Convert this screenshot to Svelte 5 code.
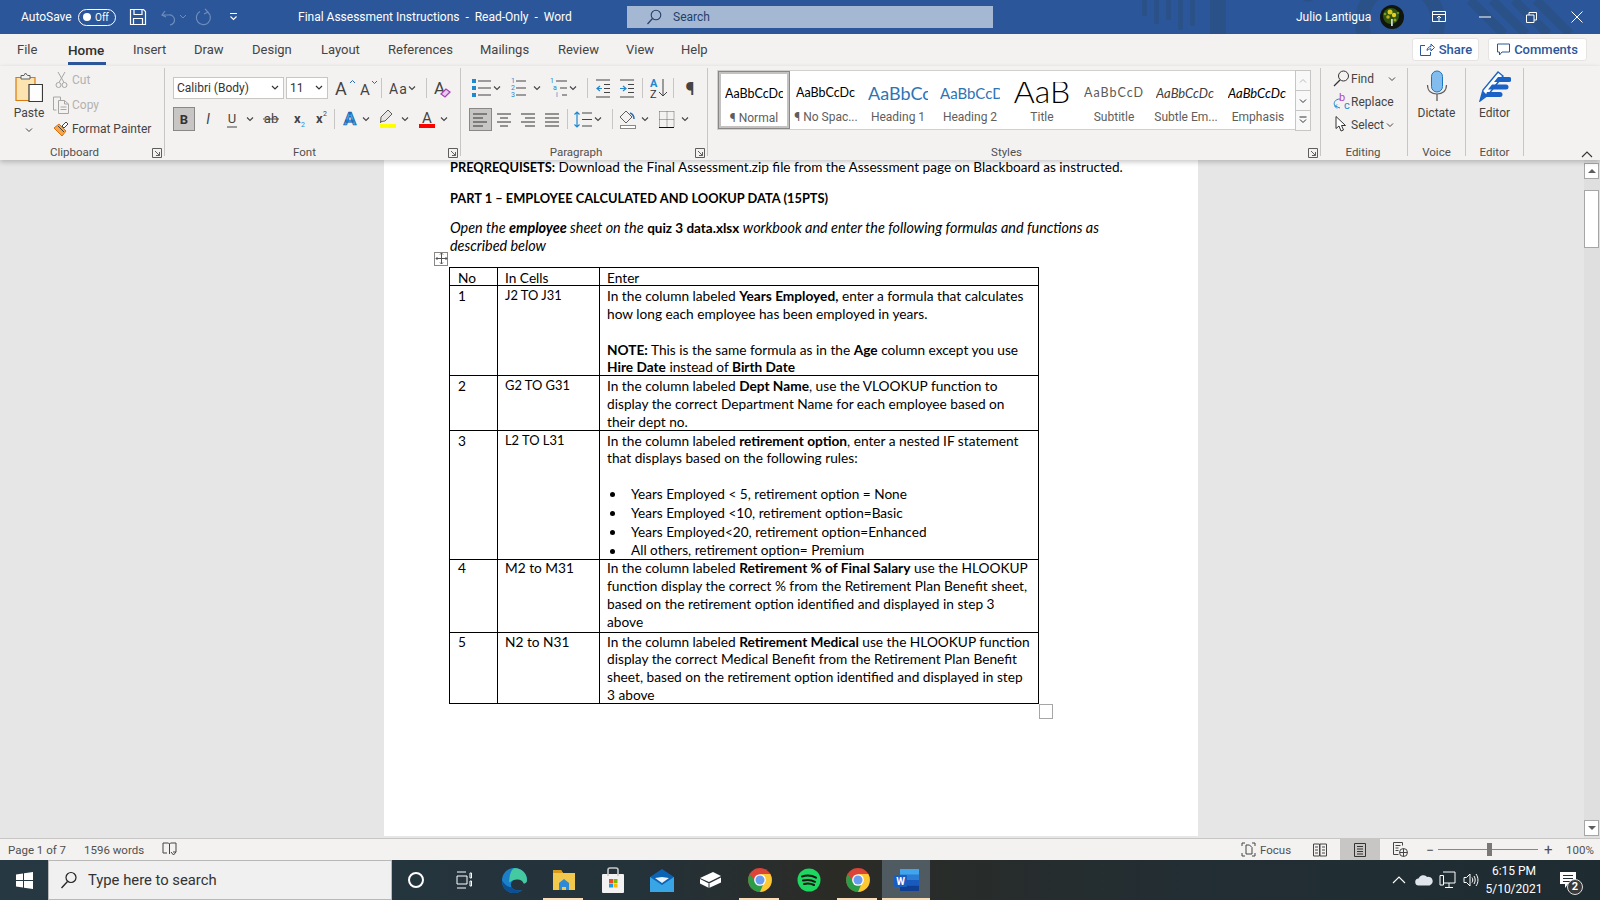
<script>
  const tabs = [
    ['File', 51], ['Home', 65], ['Insert', 61], ['Draw', 58], ['Design', 69], ['Layout', 67],
    ['References', 92], ['Mailings', 78], ['Review', 68], ['View', 55], ['Help', 40]
  ];
  const styles = [
    { s: 'AaBbCcDc', l: '¶ Normal', c: 'normal sel' },
    { s: 'AaBbCcDc', l: '¶ No Spac...', c: 'normal' },
    { s: 'AaBbCc', l: 'Heading 1', c: 'h1' },
    { s: 'AaBbCcD', l: 'Heading 2', c: 'h2' },
    { s: 'AaB', l: 'Title', c: 'title' },
    { s: 'AaBbCcD', l: 'Subtitle', c: 'sub' },
    { s: 'AaBbCcDc', l: 'Subtle Em...', c: 'sem' },
    { s: 'AaBbCcDc', l: 'Emphasis', c: 'emp' }
  ];
</script>

{#snippet chev(x, y)}
  <path d="M{x - 3} {y - 1.5}l3 3 3-3" fill="none" stroke="#444" stroke-width="1.1" />
{/snippet}

{#snippet launcher()}
  <svg class="launch" width="10" height="10" viewBox="0 0 10 10">
    <path d="M.5 9.500V.5h9v9zM3 3l4.500 4.500M7.500 4v3.500H4" fill="none" stroke="#605e5c" />
  </svg>
{/snippet}

{#snippet chrome(id)}
  <svg width="26" height="26" viewBox="0 0 24 24" data-k={id}>
    <circle cx="12" cy="12" r="11" fill="#db4437" />
    <path d="M2.500 6.500A11 11 0 0 0 12 23l5-9H8z" fill="#2b9c47" />
    <path d="M12 23A11 11 0 0 0 21.500 6.500H12l4 7z" fill="#fcc934" />
    <circle cx="12" cy="12" r="5.400" fill="#fff" />
    <circle cx="12" cy="12" r="4.200" fill="#6a9cf0" />
  </svg>
{/snippet}

<div class="app">
  <header class="titlebar">
    <svg class="pattern" width="480" height="34" viewBox="0 0 480 34" aria-hidden="true">
      <g fill="#2a5288">
        <rect x="22" y="0" width="5" height="16" /><rect x="34" y="0" width="5" height="24" />
        <rect x="46" y="0" width="5" height="20" /><rect x="58" y="0" width="5" height="30" />
        <rect x="70" y="0" width="5" height="26" /><rect x="90" y="0" width="16" height="34" />
      </g>
      <circle cx="188" cy="-6" r="8" fill="#2a5288" />
      <circle cx="280" cy="22" r="38" fill="none" stroke="#2a5288" stroke-width="14" />
      <path d="M350 0l34 34M372 0l34 34M394 0l34 34M416 0l34 34" stroke="#2a5288" stroke-width="9" />
    </svg>
    <div class="tb-left">
      <span class="autosave">AutoSave</span>
      <span class="toggle"><i></i><b>Off</b></span>
      <svg width="18" height="18" viewBox="0 0 18 18"><path d="M1.500 1.500h13l2 2v13h-15zM5 1.500v5h8v-5M4.500 16.500v-6h9v6" fill="none" stroke="#fff" stroke-width="1.200" /></svg>
      <svg class="dim" width="26" height="18" viewBox="0 0 26 18"><path d="M5 3L2 7l4 2M2.500 7H9a5 5 0 0 1 1 10" fill="none" stroke="#6f8dba" stroke-width="1.200" /><path d="M20 7l3 3 3-3" fill="none" stroke="#6f8dba" /></svg>
      <svg class="dim2" width="18" height="18" viewBox="0 0 18 18"><path d="M11 1l3 3-4 2M13.500 4A7 7 0 1 1 6 3.500" fill="none" stroke="#6f8dba" stroke-width="1.200" /></svg>
      <svg class="qat" width="10" height="10" viewBox="0 0 10 10"><path d="M1 1.500h7M1.500 4.500l3 3 3-3" fill="none" stroke="#fff" stroke-width="1.100" /></svg>
    </div>
    <div class="doc-title">Final Assessment Instructions &nbsp;-&nbsp; Read-Only &nbsp;-&nbsp; Word</div>
    <div class="search">
      <svg width="16" height="16" viewBox="0 0 16 16"><circle cx="10" cy="6" r="4.800" fill="none" stroke="#243f6b" stroke-width="1.100" /><path d="M6.500 9.500L1.500 15" stroke="#243f6b" stroke-width="1.200" /></svg>
      <span>Search</span>
    </div>
    <div class="user">Julio Lantigua</div>
    <svg class="avatar" width="24" height="24" viewBox="0 0 24 24">
      <circle cx="12" cy="12" r="12" fill="#10160d" />
      <circle cx="11" cy="11" r="8" fill="#2f5213" />
      <circle cx="10" cy="7" r="2.500" fill="#d8c820" /><circle cx="14" cy="10" r="2.200" fill="#e3d321" />
      <circle cx="8" cy="12" r="1.800" fill="#b9ae1e" /><circle cx="15" cy="15" r="1.500" fill="#8fa51c" />
      <circle cx="5" cy="9" r="1.300" fill="#7e9c1e" /><circle cx="18" cy="8" r="1.300" fill="#5f8a1e" />
      <rect x="11" y="14" width="1.800" height="7" fill="#c9d8d0" />
    </svg>
    <div class="winbtns">
      <svg width="15" height="12" viewBox="0 0 15 12"><path d="M.5.500h13v10H.5zM.5 3.500h13M7 10V5M5 7l2-2 2 2" fill="none" stroke="#fff" /></svg>
      <svg class="w-min" width="13" height="12" viewBox="0 0 13 12"><path d="M0 6h12" stroke="#fff" /></svg>
      <svg width="11" height="11" viewBox="0 0 11 11"><path d="M.5 3h7.500v7.500H.5zM3 3V.5h7.500V8H8" fill="none" stroke="#fff" /></svg>
      <svg width="12" height="12" viewBox="0 0 12 12"><path d="M.5.500l11 11M11.500.500l-11 11" stroke="#fff" /></svg>
    </div>
  </header>

  <nav class="tabrow">
    {#each tabs as [t, w]}
      <div class="tab" style="width:{w}px"><span class:active={t === 'Home'}>{t}</span></div>
    {/each}
    <div class="actions">
      <button class="act share">
        <svg width="16" height="15" viewBox="0 0 16 15"><path d="M6 3.500H1.500v10h10V10M8 8.500C8 6 10 4.500 12 4.500V2l3.500 3.500L12 9V6.800c-2 0-3 .7-4 1.700z" fill="none" stroke="#2b579a" /></svg>
        Share
      </button>
      <button class="act comments">
        <svg width="13" height="13" viewBox="0 0 13 13"><path d="M.5 1h12v8H5l-2.500 3V9h-2z" fill="none" stroke="#2b579a" /></svg>
        Comments
      </button>
    </div>
  </nav>

  <section class="ribbon">
    <div class="group clip">
      <div class="body clip-body">
        <div class="paste">
          <svg width="28" height="32" viewBox="0 0 28 32">
            <path d="M1 5.500h19v23H1z" fill="#fde3b0" stroke="#d97a10" stroke-width="1.200" />
            <path d="M6 7V3.500h3L10.500 1l2 2.500H15V7z" fill="#f3f2f1" stroke="#605e5c" />
            <path d="M14 12.500h13.500v17H14z" fill="#fdfdfd" stroke="#3b3a39" stroke-width="1.200" />
          </svg>
          <span>Paste</span>
          <svg width="10" height="6" viewBox="0 0 10 6"><path d="M2 1.500l3 3 3-3" fill="none" stroke="#444" /></svg>
        </div>
        <div class="clip-side">
          <div class="row disabled">
            <svg width="19" height="18" viewBox="0 0 19 18"><path d="M5 1l6 10.500M12 1L6 11.500" fill="none" stroke="#a8a6a4" /><circle cx="5.500" cy="14" r="2.500" fill="none" stroke="#a8a6a4" /><circle cx="11.500" cy="14" r="2.500" fill="none" stroke="#a8a6a4" /></svg>
            <span>Cut</span>
          </div>
          <div class="row disabled">
            <svg width="19" height="18" viewBox="0 0 19 18"><path d="M.5 1h7v3M3.500 14H.5V1M5.500 4.500h6l4 3.500v9.500h-10zM11.500 4.500V8h4M7.500 11h6M7.500 13.500h6" fill="none" stroke="#a8a6a4" /></svg>
            <span>Copy</span>
          </div>
          <div class="row">
            <svg width="19" height="18" viewBox="0 0 19 18"><path d="M9 6l4-4 2 2-4 4z" fill="#fff" stroke="#444" /><path d="M6 4l7 7-4 5-8-8z" fill="#f6a74b" stroke="#d9700e" /><path d="M5 6l6 6" stroke="#444" /></svg>
            <span>Format Painter</span>
          </div>
        </div>
      </div>
      <div class="glabel">Clipboard{@render launcher()}</div>
    </div>

    <div class="group font">
      <div class="body rows">
        <div class="tline">
          <div class="sel-box fname">Calibri (Body)<svg width="10" height="6" viewBox="0 0 10 6"><path d="M2 1l3 3 3-3" fill="none" stroke="#333" stroke-width="1.200" /></svg></div>
          <div class="sel-box fsize">11<svg width="10" height="6" viewBox="0 0 10 6"><path d="M2 1l3 3 3-3" fill="none" stroke="#333" stroke-width="1.200" /></svg></div>
          <svg width="132" height="24">
            <text x="7" y="19" class="ua" font-size="18">A</text>
            <path d="M22 7l2.500-2.500L27 7" fill="none" stroke="#2b6cb0" />
            <text x="32" y="19" class="ua" font-size="15">A</text>
            <path d="M44 5l2.500 2.500L49 5" fill="none" stroke="#2b6cb0" />
            <path d="M53.500 2v20" stroke="#c8c6c4" />
            <text x="61" y="18" class="ua" font-size="14" letter-spacing="1">Aa</text>
            {@render chev(84, 12)}
            <path d="M98.500 2v20" stroke="#c8c6c4" />
            <text x="106" y="18" class="ua" font-size="17">A</text>
            <path d="M113 18l5-5 4 3-5 5z" fill="#e8cdee" stroke="#a742b8" stroke-width="1.300" />
          </svg>
        </div>
        <div class="tline">
          <button class="bold-btn">B</button>
          <svg width="265" height="24">
            <text x="13" y="17" class="ua" text-anchor="middle" font-size="14" font-style="italic">I</text>
            <text x="37" y="16" class="ua" text-anchor="middle" font-size="13">U</text>
            <path d="M32 20h10" stroke="#444" />
            {@render chev(55, 12)}
            <text x="76" y="16" class="ua" text-anchor="middle" font-size="13">ab</text>
            <path d="M68 12h16" stroke="#444" />
            <text x="99" y="16" class="ua" font-size="13" font-weight="700">x</text>
            <text x="106" y="20" font-size="7" fill="#2b88d8" class="ub">2</text>
            <text x="121" y="16" class="ua" font-size="13" font-weight="700">x</text>
            <text x="128" y="9" font-size="7" fill="#444" class="ub">2</text>
            <path d="M139.500 2v20" stroke="#c8c6c4" />
            <text x="155" y="18" class="ub" text-anchor="middle" font-size="19" font-weight="700" fill="#4aa3e8" stroke="#0f5da8" stroke-width=".7">A</text>
            {@render chev(171, 12)}
            <path d="M193 3l4 4-7 7-4 .5-.5 1.500 .5-6z" fill="#e8e6e4" stroke="#605e5c" />
            <rect x="185" y="17" width="16" height="4" fill="#ffff00" />
            {@render chev(210, 12)}
            <text x="232" y="16" class="ua" text-anchor="middle" font-size="15">A</text>
            <rect x="224" y="17" width="16" height="4" fill="#ff0000" />
            {@render chev(249, 12)}
          </svg>
        </div>
      </div>
      <div class="glabel">Font{@render launcher()}</div>
    </div>

    <div class="group para">
      <div class="body rows">
        <svg width="242" height="24">
          <g fill="#1e88d0"><rect x="7" y="3" width="4" height="4" /><rect x="7" y="10" width="4" height="4" /><rect x="7" y="17" width="4" height="4" /></g>
          <path d="M13 5h13M13 12h13M13 19h13" stroke="#444" />
          {@render chev(32, 12)}
          <g fill="#1e88d0" font-size="7" class="ub"><text x="46" y="7">1</text><text x="46" y="14">2</text><text x="46" y="21">3</text></g>
          <path d="M51 5h10M51 12h10M51 19h10" stroke="#444" />
          {@render chev(72, 12)}
          <g fill="#1e88d0" font-size="7" class="ub"><text x="85" y="7">1</text><text x="88" y="14">a</text><text x="91" y="21">i</text></g>
          <path d="M91 5h11M95 12h7M97 19h5" stroke="#444" />
          {@render chev(108, 12)}
          <path d="M122.500 2v20" stroke="#c8c6c4" />
          <path d="M131 4h14M139 8.500h6M139 12.500h6M139 16.500h6M131 21h14" stroke="#444" />
          <path d="M137 12.500h-5M135 10l-3 2.500 3 2.500" fill="none" stroke="#1e88d0" stroke-width="1.200" />
          <path d="M155 4h14M163 8.500h6M163 12.500h6M163 16.500h6M155 21h14" stroke="#444" />
          <path d="M155 12.500h6M158 10l3 2.500-3 2.500" fill="none" stroke="#1e88d0" stroke-width="1.200" />
          <path d="M177.500 2v20" stroke="#c8c6c4" />
          <text x="185" y="11" font-size="11" font-weight="700" fill="#1e88d0" class="ub">A</text>
          <text x="185" y="22" font-size="11" fill="#333" class="ub">Z</text>
          <path d="M198 3v17M194 16l4 4 4-4" fill="none" stroke="#444" />
          <path d="M208.500 2v20" stroke="#c8c6c4" />
          <text x="225" y="19" text-anchor="middle" font-size="18" font-weight="700" fill="#444" class="ub">¶</text>
        </svg>
        <svg width="242" height="24">
          <rect x="4.500" y="1.500" width="22" height="22" fill="#c8c6c4" stroke="#8a8886" />
          <path d="M8 7h14M8 11h10M8 15h14M8 19h10" stroke="#333" />
          <path d="M32 7h14M35 11h8M32 15h14M35 19h8" stroke="#333" />
          <path d="M56 7h14M60 11h10M56 15h14M60 19h10" stroke="#333" />
          <path d="M80 7h14M80 11h14M80 15h14M80 19h14" stroke="#333" />
          <path d="M102.500 2v20" stroke="#c8c6c4" />
          <path d="M112 5v15M109.500 7.500L112 5l2.500 2.500M109.500 17.500L112 20l2.500-2.500" fill="none" stroke="#1e88d0" stroke-width="1.200" />
          <path d="M117 6h10M117 12.500h10M117 19h10" stroke="#444" />
          {@render chev(133, 12)}
          <path d="M147.500 2v20" stroke="#c8c6c4" />
          <path d="M161 4l6 6-6 6-6-6z" fill="#f3f2f1" stroke="#605e5c" />
          <path d="M165 6c3 1 4 3 4 6" fill="none" stroke="#2b6cb0" stroke-width="1.500" />
          <rect x="155.500" y="18.500" width="15" height="3" fill="#fff" stroke="#8a8886" />
          {@render chev(180, 12)}
          <path d="M194.500 4.500h14.500M194.500 4.500v16M209 4.500v16M202 4.500v16M194.500 12.500h14.500" fill="none" stroke="#666" stroke-dasharray="1 1" />
          <path d="M194 20.500h15" stroke="#111" />
          {@render chev(220, 12)}
        </svg>
      </div>
      <div class="glabel">Paragraph{@render launcher()}</div>
    </div>

    <div class="group stylesg">
      <div class="body">
        <div class="gallery">
          {#each styles as st}
            <div class="style {st.c}">
              <div class="sample"><span>{st.s}</span></div>
              <div class="slabel">{st.l}</div>
            </div>
          {/each}
          <div class="gscroll">
            <div><svg width="10" height="6" viewBox="0 0 10 6"><path d="M2 4.500l3-3 3 3" fill="none" stroke="#bdbbb9" /></svg></div>
            <div><svg width="10" height="6" viewBox="0 0 10 6"><path d="M2 1.500l3 3 3-3" fill="none" stroke="#333" /></svg></div>
            <div><svg width="10" height="9" viewBox="0 0 10 9"><path d="M1.500 1h7M2 3.500l3 3 3-3" fill="none" stroke="#333" /></svg></div>
          </div>
        </div>
      </div>
      <div class="glabel">Styles{@render launcher()}</div>
    </div>

    <div class="group editing">
      <div class="body edit-list">
        <div class="row">
          <svg width="17" height="17" viewBox="0 0 17 17"><circle cx="10.500" cy="6" r="5" fill="none" stroke="#333" /><path d="M7 10l-6 6" stroke="#333" stroke-width="1.300" /></svg>
          <span>Find</span>
          <svg class="rchev" width="10" height="6" viewBox="0 0 10 6"><path d="M2 1.500l3 3 3-3" fill="none" stroke="#444" /></svg>
        </div>
        <div class="row">
          <svg width="17" height="17" viewBox="0 0 17 17">
            <text x="6" y="8" font-size="11" fill="#b146c2" class="ub">b</text>
            <text x="11" y="16" font-size="11" fill="#1e88d0" class="ub">c</text>
            <path d="M7 6C2 6 0 10 2 13l5 2M4 11.500L2 13.500l2 2" fill="none" stroke="#1e88d0" />
          </svg>
          <span>Replace</span>
        </div>
        <div class="row">
          <svg width="17" height="17" viewBox="0 0 17 17"><path d="M3 .5v12l3-2.500 2 5 2.500-1-2-4.500h4z" fill="#fff" stroke="#333" /></svg>
          <span>Select</span>
          <svg class="schev" width="10" height="6" viewBox="0 0 10 6"><path d="M2 1.500l3 3 3-3" fill="none" stroke="#444" /></svg>
        </div>
      </div>
      <div class="glabel">Editing</div>
    </div>

    <div class="group voice">
      <div class="body big">
        <svg width="22" height="32" viewBox="0 0 22 32">
          <rect x="5.500" y="1" width="11" height="21" rx="5.500" fill="#83bdee" stroke="#1c74c4" />
          <path d="M1.500 15c0 6 4 9 9.500 9s9.500-3 9.500-9" fill="none" stroke="#605e5c" stroke-width="1.200" />
          <path d="M11 24v7" stroke="#605e5c" stroke-width="1.300" />
        </svg>
        <span>Dictate</span>
      </div>
      <div class="glabel">Voice</div>
    </div>

    <div class="group editor">
      <div class="body big">
        <svg width="32" height="32" viewBox="0 0 32 32">
          <path d="M1 31L4 20 19 2l5 4L9 25z" fill="#fff" stroke="#1a62c6" stroke-width="1.400" />
          <path d="M1 31l7-6-4-4z" fill="#1a62c6" />
          <path d="M19 7h11a2 2 0 0 1 0 5H15zM13 14.500h14a2 2 0 0 1 0 5H9zM8 22h13a2 2 0 0 1 0 5H6z" fill="#1a62c6" />
        </svg>
        <span>Editor</span>
      </div>
      <div class="glabel">Editor</div>
    </div>

    <svg class="collapse" width="14" height="8" viewBox="0 0 14 8"><path d="M2 7l5-5 5 5" fill="none" stroke="#333" stroke-width="1.100" /></svg>
  </section>

  <main class="docarea">
    <div class="canvas">
      <article class="page">
        <p class="first"><b>PREQREQUISETS:</b> Download the Final Assessment.zip file from the Assessment page on Blackboard as instructed.</p>
        <p class="part"><b>PART 1 – EMPLOYEE CALCULATED AND LOOKUP DATA (15PTS)</b></p>
        <p class="open"><em>Open the <b>employee</b> sheet on the</em> <b>quiz 3 data.xlsx</b> <em>workbook and enter the following formulas and functions as<br />described below</em></p>
        <div class="tablewrap">
          <span class="move"><svg width="13" height="13" viewBox="0 0 13 13"><path d="M6.500 1v11M1 6.500h11M5 2.500L6.500 1 8 2.500M5 10.500L6.500 12 8 10.500M2.500 5L1 6.500 2.500 8M10.500 5L12 6.500 10.500 8" fill="none" stroke="#555" /></svg></span>
          <table>
            <colgroup><col class="c1" /><col class="c2" /><col class="c3" /></colgroup>
            <tbody>
              <tr><td>No</td><td>In Cells</td><td>Enter</td></tr>
              <tr>
                <td>1</td><td class="caps">J2 TO J31</td>
                <td>In the column labeled <b>Years Employed,</b> enter a formula that calculates<br />how long each employee has been employed in years.<br /><br /><b>NOTE:</b> This is the same formula as in the <b>Age</b> column except you use<br /><b>Hire Date</b> instead of <b>Birth Date</b></td>
              </tr>
              <tr>
                <td>2</td><td class="caps">G2 TO G31</td>
                <td>In the column labeled <b>Dept Name</b>, use the VLOOKUP function to<br />display the correct Department Name for each employee based on<br />their dept no.</td>
              </tr>
              <tr>
                <td>3</td><td class="caps">L2 TO L31</td>
                <td>In the column labeled <b>retirement option</b>, enter a nested IF statement<br />that displays based on the following rules:<br /><br />
                  <ul>
                    <li>Years Employed &lt; 5, retirement option = None</li>
                    <li>Years Employed &lt;10, retirement option=Basic</li>
                    <li>Years Employed&lt;20, retirement option=Enhanced</li>
                    <li class="last">All others, retirement option= Premium</li>
                  </ul>
                </td>
              </tr>
              <tr class="row4">
                <td>4</td><td>M2 to M31</td>
                <td>In the column labeled <b>Retirement % of Final Salary</b> use the HLOOKUP<br />function display the correct % from the Retirement Plan Benefit sheet,<br />based on the retirement option identified and displayed in step 3<br />above</td>
              </tr>
              <tr class="lastrow">
                <td>5</td><td>N2 to N31</td>
                <td>In the column labeled <b>Retirement Medical</b> use the HLOOKUP function<br />display the correct Medical Benefit from the Retirement Plan Benefit<br />sheet, based on the retirement option identified and displayed in step<br />3 above</td>
              </tr>
            </tbody>
          </table>
          <span class="resize"></span>
        </div>
      </article>
    </div>
    <aside class="scrollbar">
      <div class="sbtn"><svg width="10" height="6" viewBox="0 0 10 6"><path d="M1 5l4-4 4 4z" fill="#605e5c" /></svg></div>
      <div class="thumb"></div>
      <div class="sbtn down"><svg width="10" height="6" viewBox="0 0 10 6"><path d="M1 1l4 4 4-4z" fill="#605e5c" /></svg></div>
    </aside>
  </main>

  <footer class="status">
    <span class="st-page">Page 1 of 7</span>
    <span class="st-words">1596 words</span>
    <svg width="15" height="15" viewBox="0 0 15 15"><path d="M1 1h5.500l1 1 1-1H14v9l-3 0M7.500 2v10M1 1v10h4M9 10l2.500 3L14 10" fill="none" stroke="#444" /></svg>
    <div class="st-right">
      <svg width="15" height="15" viewBox="0 0 15 15"><path d="M1 4V1h3M11 1h3v3M1 11v3h3M14 11v3h-3M5 3h3.500L11 5.500V12H5z" fill="none" stroke="#444" /></svg>
      <span class="st-focus">Focus</span>
      <svg class="st-read" width="14" height="14" viewBox="0 0 14 14"><path d="M.5 1h6v12h-6zM7 1h6.500v12H7zM2 4h3M2 7h3M2 10h3M9 4h3M9 7h3M9 10h3" fill="none" stroke="#444" /></svg>
      <div class="st-print"><svg width="12" height="14" viewBox="0 0 12 14"><path d="M.5.500h11v13H.5zM3 3.500h6M3 6h6M3 8.500h6M3 11h6" fill="none" stroke="#333" /></svg></div>
      <svg class="st-web" width="15" height="15" viewBox="0 0 15 15"><path d="M.5.500h9v3M.5.500v12h5M2.500 3.500h5M2.500 6h3M2.500 8.500h3" fill="none" stroke="#444" /><circle cx="10.500" cy="10.500" r="4" fill="none" stroke="#444" /><path d="M6.500 10.500h8M10.500 6.500v8" stroke="#444" /></svg>
      <span class="st-minus">−</span>
      <div class="slider"><i></i></div>
      <span class="st-plus">+</span>
      <span class="st-zoom">100%</span>
    </div>
  </footer>

  <div class="taskbar">
    <div class="start">
      <svg width="17" height="17" viewBox="0 0 17 17"><path d="M0 2.400L7 1.400v6.600H0zM8 1.300L17 0v8H8zM0 9h7v6.600L0 14.600zM8 9h9v8l-9-1.300z" fill="#fff" /></svg>
    </div>
    <div class="tsearch">
      <svg width="18" height="18" viewBox="0 0 18 18"><circle cx="11" cy="6.500" r="5" fill="none" stroke="#222" stroke-width="1.200" /><path d="M7.500 10.500L1.500 17" stroke="#222" stroke-width="1.300" /></svg>
      <span>Type here to search</span>
    </div>
    <div class="cell"><svg width="18" height="18" viewBox="0 0 18 18"><circle cx="9" cy="9" r="7" fill="none" stroke="#fff" stroke-width="2" /></svg></div>
    <div class="cell"><svg width="18" height="18" viewBox="0 0 18 18"><path d="M2 1h9M2 17h9M2 5h10v8H2zM15 2v5h1.500V2zM15 10v5h1.500v-5z" fill="none" stroke="#fff" /></svg></div>
    <div class="cell apps first-app">
      <svg width="25" height="25" viewBox="0 0 24 24">
        <path d="M12 0C5 0 .2 5 0 12c-.2 7 5 12 11.500 12 3 0 6-1 8-3-4 1.500-9 .5-10.500-3-1.500-3.500 1-7 5-7.500 3-.4 6 1 7 4 2 0 3-1.500 3-3.500C24 5 18.500 0 12 0z" fill="#1a80c9" />
        <path d="M12 0C18.500 0 24 5 24 11.500c0 2-1 3.500-3 3.500-1-3-4-4.400-7-4-2 .2-5 1-7 3C7 8 8 2 12 0z" fill="#45c9a0" />
        <path d="M9 18c1.500 3.500 6.500 4.500 10.500 3-2 2-5 3-8 3C5 24 0 19 0 12c3 5 7 7 9 6z" fill="#0c4f94" />
      </svg>
    </div>
    <div class="cell apps">
      <svg width="24" height="22" viewBox="0 0 24 22"><path d="M1 1h8l2 3h12v17H1z" fill="#f2c94c" /><path d="M1 1h8l2 3H1z" fill="#d99a1a" /><path d="M7 14l5-4 5 4v7h-3v-3h-4v3H7z" fill="#2f89d9" /></svg>
      <span class="run"></span>
    </div>
    <div class="cell apps">
      <svg width="24" height="26" viewBox="0 0 24 26"><rect x="1" y="7" width="22" height="19" rx="1" fill="#f2f2f2" /><path d="M7 9V3a2 2 0 0 1 2-2h6a2 2 0 0 1 2 2v6" fill="none" stroke="#c9c9c9" stroke-width="1.600" /><rect x="8" y="12" width="4" height="4" fill="#ea4d26" /><rect x="12.500" y="12" width="4" height="4" fill="#7fba00" /><rect x="8" y="16.500" width="4" height="4" fill="#1f9ae0" /><rect x="12.500" y="16.500" width="4" height="4" fill="#ffb900" /></svg>
    </div>
    <div class="cell apps">
      <svg width="24" height="24" viewBox="0 0 24 24"><path d="M12 1L0 9v15h24V9z" fill="#0c63b4" /><path d="M0 9l12 8 12-8v15H0z" fill="#38a6e6" /><path d="M5 10l7-1 7 1-7 5z" fill="#e8f2fb" /></svg>
    </div>
    <div class="cell apps">
      <svg width="23" height="18" viewBox="0 0 23 18"><path d="M1 7L14 1l8 4L10 11z" fill="#fff" /><path d="M1 8l9 4.500 12-6v5L10 17 1 12.500z" fill="#fff" /><path d="M10 12.500V17" stroke="#232f36" /></svg>
    </div>
    <div class="cell apps">{@render chrome('a')}<span class="run"></span></div>
    <div class="cell apps">
      <svg width="24" height="24" viewBox="0 0 24 24"><circle cx="12" cy="12" r="11.500" fill="#1ed760" /><path d="M5 8.500c4.500-1.300 10-1 14 1.200M6 12.500c4-1 8.500-.7 12 1.300M7 16c3.500-.8 7-.5 10 1" fill="none" stroke="#161616" stroke-width="2" stroke-linecap="round" /></svg>
    </div>
    <div class="cell apps">{@render chrome('b')}<span class="run"></span></div>
    <div class="cell apps word">
      <svg width="25" height="22" viewBox="0 0 25 22">
        <rect x="6" y="0" width="19" height="22" rx="1" fill="#2b7cd3" />
        <rect x="6" y="0" width="19" height="5.500" fill="#41a5ee" />
        <rect x="6" y="11" width="19" height="5.500" fill="#185abd" />
        <rect x="6" y="16.500" width="19" height="5.500" fill="#103f91" />
        <rect x="0" y="6" width="13" height="12" rx="1" fill="#1a5dc0" />
        <text x="6.500" y="15.500" text-anchor="middle" font-size="10" font-weight="700" fill="#fff" class="ub">W</text>
      </svg>
      <span class="run wide"></span>
    </div>
    <div class="tray">
      <svg width="14" height="10" viewBox="0 0 14 10"><path d="M1 8l6-6 6 6" fill="none" stroke="#fff" stroke-width="1.100" /></svg>
      <svg class="t-cloud" width="18" height="12" viewBox="0 0 18 12"><path d="M4 11.500a3.500 3.500 0 0 1-.5-7A5 5 0 0 1 12 3a3.500 3.500 0 0 1 2.500 8.500z" fill="#dfe5ea" /></svg>
      <svg class="t-net" width="17" height="18" viewBox="0 0 17 18"><path d="M4 1h12v11H4M1 4.500h3.500V14H1zM10 12v4M6 16.500h8" fill="none" stroke="#fff" /></svg>
      <svg class="t-snd" width="16" height="16" viewBox="0 0 16 16"><path d="M1 5.500h2.500L7 2v12l-3.500-3.500H1zM9 5.500c1 1.500 1 3.500 0 5M11 4c1.600 2.500 1.600 5.500 0 8M13 2c2.600 3.500 2.600 8.500 0 12" fill="none" stroke="#fff" /></svg>
      <div class="clock"><span>6:15 PM</span><span>5/10/2021</span></div>
      <div class="notif">
        <svg width="18" height="17" viewBox="0 0 18 17"><path d="M0 0h16v12H8l-3 4v-4H0z" fill="#fff" /><path d="M3 3.500h10M3 6.500h10M3 9.500h7" stroke="#232f36" /></svg>
        <span class="badge">2</span>
      </div>
    </div>
  </div>
</div>

<style>
  :global(body) { margin: 0; background: #e6e6e6; }
  .app { width: 1600px; height: 900px; display: flex; flex-direction: column; overflow: hidden; font-family: Roboto, "Liberation Sans", sans-serif; color: #444; position: relative; }
  svg { flex: none; display: block; }
  .ua { font-family: Roboto, sans-serif; fill: #444; }
  .ub { font-family: Roboto, sans-serif; }

  .titlebar { height: 34px; background: #2b579a; color: #fff; display: flex; align-items: center; position: relative; flex: none; font-size: 12px; }
  .pattern { position: absolute; left: 1120px; top: 0; }
  .tb-left { width: 298px; padding-left: 21px; box-sizing: border-box; display: flex; align-items: center; position: relative; }
  .autosave { width: 57px; }
  .toggle { width: 38px; height: 17px; border: 1.300px solid #fff; border-radius: 10px; display: flex; align-items: center; box-sizing: border-box; padding-left: 4px; font-size: 10px; margin-right: 13px; }
  .toggle i { width: 8px; height: 8px; border-radius: 50%; background: #fff; margin-right: 4px; }
  .toggle b { font-weight: 400; }
  .dim { margin-left: 13px; }
  .dim2 { margin-left: 8px; }
  .qat { margin-left: 17px; }
  .doc-title { width: 329px; position: relative; font-size: 12px; white-space: nowrap; }
  .search { width: 366px; height: 22px; background: #a5b8d3; display: flex; align-items: center; position: relative; color: #243f6b; padding-left: 19px; box-sizing: border-box; }
  .search span { margin-left: 11px; }
  .user { margin-left: 303px; width: 84px; position: relative; white-space: nowrap; }
  .avatar { position: relative; }
  .winbtns { display: flex; align-items: center; position: relative; margin-left: 28px; gap: 34px; }
  .w-min { margin-left: -2px; }

  .tabrow { height: 32px; background: #f3f2f1; display: flex; flex: none; padding-left: 17px; font-size: 13px; position: relative; }
  .tab { padding-top: 7px; box-sizing: border-box; line-height: 18px; color: #444; }
  .tab span { display: inline-block; }
  .tab .active { color: #2f2f2f; font-weight: 500; font-size: 13.500px; min-width: 38px; padding-bottom: 3px; border-bottom: 3px solid #2b579a; }
  .actions { margin-left: auto; display: flex; gap: 9px; padding: 4px 13px 0 0; align-items: flex-start; }
  .act { height: 23px; background: #fff; border: 1px solid #e6e4e2; border-radius: 3px; color: #2b579a; font: 500 13px Roboto, sans-serif; display: flex; align-items: center; gap: 4px; padding: 0; justify-content: center; box-sizing: border-box; }
  .share { width: 67px; }
  .comments { width: 99px; }

  .ribbon { height: 94px; background: #f3f2f1; display: flex; flex: none; position: relative; z-index: 2; box-shadow: 0 2px 5px rgba(0, 0, 0, .22); font-size: 12px; }
  .group { display: flex; flex-direction: column; box-sizing: border-box; height: 88px; margin-top: 2px; border-right: 1px solid #c8c6c4; flex: none; }
  .body { height: 76px; flex: none; }
  .glabel { height: 16px; line-height: 16px; text-align: center; position: relative; color: #505050; font-size: 11.500px; box-sizing: border-box; }
  .launch { position: absolute; right: 2px; top: 4px; }
  .clip .glabel { padding-right: 15px; }
  .font .glabel { padding-right: 24px; }
  .para .glabel { padding-right: 20px; }
  .stylesg .glabel { padding-right: 24px; }
  .editing .glabel { padding-right: 14px; }

  .clip { width: 165px; }
  .clip-body { display: flex; }
  .paste { width: 53px; flex: none; display: flex; flex-direction: column; align-items: center; padding: 4px 0 0 5px; box-sizing: border-box; }
  .paste span { margin-top: 1px; line-height: 16px; }
  .paste svg:last-child { margin-top: 6px; }
  .row { display: flex; align-items: center; height: 24.500px; }
  .row span { white-space: nowrap; }
  .disabled { color: #b3b1af; }

  .font { width: 296px; padding-left: 8px; }
  .rows { padding-top: 8px; box-sizing: border-box; display: flex; flex-direction: column; gap: 7px; }
  .tline { display: flex; align-items: center; height: 24px; }
  .sel-box { height: 22px; background: #fff; border: 1px solid #c8c6c4; box-sizing: border-box; display: flex; align-items: center; justify-content: space-between; padding: 0 3px; color: #333; font-size: 12px; }
  .fname { width: 111px; margin-right: 2px; }
  .fsize { width: 42px; }
  .bold-btn { width: 22px; height: 24px; background: #c8c6c4; border: 1px solid #8a8886; padding: 0; font: 700 13px Roboto, sans-serif; color: #333; }

  .para { width: 247px; padding-left: 4px; }

  .stylesg { width: 613px; padding-left: 9px; }
  .gallery { margin-top: 2px; height: 60px; width: 594px; background: #fff; border: 1px solid #d2d0ce; box-sizing: border-box; display: flex; position: relative; }
  .style { width: 72px; flex: none; box-sizing: border-box; padding: 2px; text-align: center; }
  .style.sel { border: 3px solid #c4c2c0; outline: 1px solid #8a8886; outline-offset: -1px; padding: 0; }
  .sample { height: 39px; overflow: hidden; display: flex; align-items: center; justify-content: center; margin: 0 4px; white-space: nowrap; color: #000; font-family: Lato, sans-serif; font-size: 12.500px; position: relative; }
  .sample span { flex: none; }
  .h1 .sample { color: #2e74b5; font-size: 18px; justify-content: flex-start; }
  .h2 .sample { color: #2e74b5; font-size: 15px; justify-content: flex-start; }
  .title .sample { height: 30px; margin: 9px 0 0; font-size: 32px; line-height: 30px; font-weight: 300; }
  .title .sample span { transform: translateY(-6px); }
  .sub .sample { color: #5a5a5a; letter-spacing: 1px; justify-content: flex-start; }
  .sem .sample { color: #404040; font-style: italic; font-size: 13px; }
  .emp .sample { font-style: italic; font-size: 13px; }
  .normal .sample, .sem .sample, .emp .sample { justify-content: flex-start; }
  .slabel { line-height: 16px; margin-top: -3px; color: #605e5c; white-space: nowrap; font-size: 12px; }
  .gscroll { margin-left: auto; width: 16px; margin-top: -1px; margin-right: -1px; display: flex; flex-direction: column; height: 60px; flex: none; }
  .gscroll div { flex: 1; border: 1px solid #c8c6c4; display: flex; align-items: center; justify-content: center; background: #f8f8f8; margin-bottom: -1px; }

  .editing { width: 87px; padding-left: 12px; }
  .edit-list .row { height: 23px; position: relative; top: -1px; }
  .edit-list .row span { margin-left: 1px; }
  .rchev { margin-left: 13px; }
  .schev { margin-left: 1px; }
  .voice, .editor { width: 58px; }
  .big { display: flex; flex-direction: column; align-items: center; padding-top: 2px; box-sizing: border-box; }
  .big span { margin-top: 3px; line-height: 16px; }
  .collapse { position: absolute; left: 1580px; top: 84px; }

  .docarea { flex: 1; min-height: 0; display: flex; background: #e6e6e6; }
  .canvas { flex: 1; min-width: 0; padding-left: 384px; overflow: hidden; }
  .page { width: 814px; height: 100%; background: #fff; box-sizing: border-box; padding-left: 66px; color: #000; font-family: Lato, "Liberation Sans", sans-serif; font-size: 13.700px; line-height: 18px; }
  p { margin: 0; white-space: nowrap; }
  .first { margin-top: -2px; position: relative; z-index: 1; font-size: 13.600px; }
  .first b { font-size: 12.800px; }
  .part { margin-top: 12.500px; font-size: 12.850px; }
  .open { margin-top: 12.500px; }
  .open em { font-size: 14.400px; }
  .open b { font-size: 13.500px; }
  .open em b { font-style: italic; font-size: 14.400px; }
  .tablewrap { margin-top: 11.500px; margin-left: -1px; width: 589px; position: relative; }
  .move { position: absolute; left: -15px; top: -15px; width: 14px; height: 14px; box-sizing: border-box; border: 1px solid #8a8886; display: flex; align-items: center; justify-content: center; background: #fff; }
  .resize { position: absolute; right: -15px; bottom: -15px; width: 14px; height: 15px; border: 1px solid #a6a6a6; background: #fff; box-sizing: border-box; }
  table { border-collapse: collapse; table-layout: fixed; width: 589px; border: 1.400px solid #000; }
  .c1 { width: 48px; } .c2 { width: 102px; } .c3 { width: 439px; }
  td { border: 1.300px solid #000; padding: 0 0 0 7px; vertical-align: top; line-height: 17.800px; white-space: nowrap; position: relative; top: 1px; }
  td:first-child { padding-left: 8px; }
  .caps { font-size: 12.900px; }
  .row4 td { line-height: 18px; top: -1px; }
  .lastrow td { line-height: 17.550px; top: 0; }
  ul { list-style: none; margin: 0; padding: 0; }
  li { padding-left: 24px; line-height: 19px; position: relative; font-size: 13.600px; }
  li.last { line-height: 17.800px; }
  li::before { content: ""; position: absolute; left: 3px; top: 7px; width: 5px; height: 5px; border-radius: 50%; background: #000; }

  .scrollbar { width: 16px; flex: none; background: #dfdfdf; display: flex; flex-direction: column; }
  .sbtn { height: 16px; margin-top: 3px; background: #fff; border: 1px solid #a6a6a6; box-sizing: border-box; display: flex; align-items: center; justify-content: center; margin-right: 1px; }
  .thumb { height: 58px; margin-top: 11px; margin-right: 1px; background: #fff; border: 1px solid #a6a6a6; box-sizing: border-box; }
  .sbtn.down { margin-top: auto; margin-bottom: 2px; }

  .status { height: 22px; flex: none; background: #f3f2f1; border-top: 1px solid #c8c6c4; box-sizing: border-box; display: flex; align-items: center; font-size: 11.500px; color: #505050; padding-left: 8px; white-space: nowrap; }
  .st-page { width: 76px; }
  .st-words { width: 78px; }
  .st-right { margin-left: auto; display: flex; align-items: center; height: 100%; }
  .st-focus { margin-left: 4px; width: 53px; }
  .st-print { width: 40px; height: 100%; background: #c8c6c4; display: flex; align-items: center; justify-content: center; margin-left: 13px; }
  .st-web { margin-left: 13px; }
  .st-minus { margin-left: 18px; width: 12px; font-size: 14px; }
  .slider { width: 100px; height: 1px; background: #8a8886; position: relative; }
  .slider i { position: absolute; left: 49px; top: -6px; width: 5px; height: 13px; background: #7a7875; }
  .st-plus { margin-left: 6px; font-size: 15px; width: 22px; }
  .st-zoom { width: 34px; font-size: 11.500px; }

  .taskbar { height: 40px; flex: none; display: flex; align-items: center; background: linear-gradient(90deg, #263842 0%, #24323a 40%, #2b2b25 52%, #222e34 75%, #1e2c32 100%); position: relative; }
  .start { width: 48px; display: flex; justify-content: center; }
  .tsearch { width: 344px; height: 40px; background: #f0f0f0; border: 1px solid #b8b8b8; box-sizing: border-box; display: flex; align-items: center; padding-left: 11px; color: #333; font-size: 14.800px; }
  .tsearch span { margin-left: 10px; }
  .cell { width: 48px; height: 40px; display: flex; align-items: center; justify-content: center; position: relative; }
  .apps { width: 49px; }
  .first-app { margin-left: 2px; }
  .word { background: #4f5b61; width: 48px; }
  .run { position: absolute; bottom: 0; left: 4px; right: 5px; height: 2px; background: #fbdcb4; }
  .run.wide { left: 0; right: 0; }
  .tray { margin-left: auto; display: flex; align-items: center; color: #fff; font-size: 12px; }
  .t-cloud { margin-left: 9px; }
  .t-net { margin-left: 6px; }
  .t-snd { margin-left: 7px; }
  .clock { width: 70px; display: flex; flex-direction: column; align-items: center; line-height: 18px; }
  .notif { width: 51px; height: 40px; position: relative; display: flex; align-items: center; padding-left: 11px; box-sizing: border-box; }
  .badge { position: absolute; left: 18px; top: 19px; width: 16px; height: 16px; border-radius: 50%; background: #3a3a3a; border: 1px solid #ddd; box-sizing: border-box; font-size: 11px; font-weight: 700; text-align: center; line-height: 14px; }
</style>
